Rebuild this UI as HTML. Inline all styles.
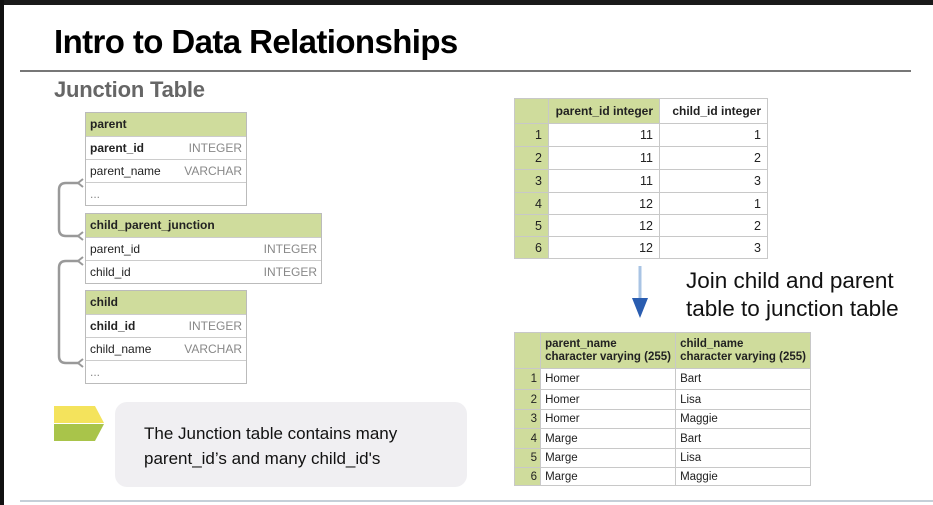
<!DOCTYPE html>
<html><head><style>
*{margin:0;padding:0;box-sizing:border-box}
body{width:933px;height:505px;background:#fff;position:relative;overflow:hidden;font-family:"Liberation Sans",sans-serif;}
.a{position:absolute}
.t{position:absolute;border:1px solid #bbb;background:#fff}
.r{height:23px;border-top:1px solid #ccc;font-size:12px;line-height:22px;padding:0 4px;display:flex;justify-content:space-between;color:#222}
.r span{color:#888}
.h{background:#cfdc9c;font-weight:bold;border-top:none}
table{border-collapse:collapse;position:absolute;font-size:12.5px;color:#222;white-space:nowrap}
td{border:1px solid #c8c8c8;padding:0 6px}
td.i{background:#cfdc9c;text-align:right}
</style></head><body>
<div class="a" style="left:0;top:0;width:933px;height:5px;background:#1a1a1a"></div>
<div class="a" style="left:0;top:0;width:4px;height:505px;background:#111"></div>
<div class="a" style="left:54px;top:23px;font-size:33px;font-weight:bold;letter-spacing:-0.6px;color:#000">Intro to Data Relationships</div>
<div class="a" style="left:20px;top:70px;width:891px;height:2px;background:#777"></div>
<div class="a" style="left:54px;top:77px;font-size:22px;font-weight:bold;color:#666;letter-spacing:-0.2px">Junction Table</div>

<svg class="a" style="left:0;top:0" width="933" height="505">
<path d="M78 183 H66 Q59 183 59 190 V229 Q59 236 66 236 H78" fill="none" stroke="#999" stroke-width="2.5"/>
<path d="M78 261 H66 Q59 261 59 268 V356 Q59 363 66 363 H78" fill="none" stroke="#999" stroke-width="2.5"/>
<path d="M83 179 L78 183 L83 187 M83 232 L78 236 L83 240 M83 257 L78 261 L83 265 M83 359 L78 363 L83 367" fill="none" stroke="#999" stroke-width="2"/>
<line x1="640" y1="266" x2="640" y2="300" stroke="#a9c4e4" stroke-width="3"/>
<polygon points="632,298 648,298 640,318" fill="#2a5db0"/>
<polygon points="54,406 95,406 104,423 54,423" fill="#f4e35c"/>
<polygon points="54,424 104,424 95,441 54,441" fill="#a9c44a"/>
<path d="M305 410 l0 8 l2 -2 l2 3" fill="#222" stroke="#222" stroke-width="0.5"/>
</svg>

<div class="t" style="left:85px;top:112px;width:162px">
<div class="r h">parent</div>
<div class="r"><b>parent_id</b><span>INTEGER</span></div>
<div class="r">parent_name<span>VARCHAR</span></div>
<div class="r"><span>...</span></div>
</div>
<div class="t" style="left:85px;top:213px;width:237px">
<div class="r h">child_parent_junction</div>
<div class="r">parent_id<span>INTEGER</span></div>
<div class="r">child_id<span>INTEGER</span></div>
</div>
<div class="t" style="left:85px;top:290px;width:162px">
<div class="r h">child</div>
<div class="r"><b>child_id</b><span>INTEGER</span></div>
<div class="r">child_name<span>VARCHAR</span></div>
<div class="r"><span>...</span></div>
</div>

<table style="left:514px;top:98px;width:254px">
<tr style="height:25px;font-weight:bold;font-size:12px"><td class="i" style="width:34px"></td><td style="background:#cfdc9c;text-align:right;width:111px">parent_id integer</td><td style="text-align:right">child_id integer</td></tr>
<tr style="height:23px"><td class="i">1</td><td style="text-align:right">11</td><td style="text-align:right">1</td></tr>
<tr style="height:23px"><td class="i">2</td><td style="text-align:right">11</td><td style="text-align:right">2</td></tr>
<tr style="height:23px"><td class="i">3</td><td style="text-align:right">11</td><td style="text-align:right">3</td></tr>
<tr style="height:22px"><td class="i">4</td><td style="text-align:right">12</td><td style="text-align:right">1</td></tr>
<tr style="height:22px"><td class="i">5</td><td style="text-align:right">12</td><td style="text-align:right">2</td></tr>
<tr style="height:22px"><td class="i">6</td><td style="text-align:right">12</td><td style="text-align:right">3</td></tr>
</table>

<div class="a" style="left:686px;top:267px;font-size:22.5px;line-height:28px;color:#111">Join child and parent<br>table to junction table</div>

<table style="left:514px;top:332px;width:297px;font-size:11.5px">
<tr style="height:36px;font-weight:bold;background:#cfdc9c;line-height:13px"><td style="width:29px"></td><td style="width:135px;padding:0 4px">parent_name<br>character varying (255)</td><td style="padding:0 4px">child_name<br>character varying (255)</td></tr>
<tr style="height:21px"><td class="i" style="padding:0 3px">1</td><td style="padding:0 4px">Homer</td><td style="padding:0 4px">Bart</td></tr>
<tr style="height:20px"><td class="i" style="padding:0 3px">2</td><td style="padding:0 4px">Homer</td><td style="padding:0 4px">Lisa</td></tr>
<tr style="height:19px"><td class="i" style="padding:0 3px">3</td><td style="padding:0 4px">Homer</td><td style="padding:0 4px">Maggie</td></tr>
<tr style="height:20px"><td class="i" style="padding:0 3px">4</td><td style="padding:0 4px">Marge</td><td style="padding:0 4px">Bart</td></tr>
<tr style="height:19px"><td class="i" style="padding:0 3px">5</td><td style="padding:0 4px">Marge</td><td style="padding:0 4px">Lisa</td></tr>
<tr style="height:18px"><td class="i" style="padding:0 3px">6</td><td style="padding:0 4px">Marge</td><td style="padding:0 4px">Maggie</td></tr>
</table>

<div class="a" style="left:115px;top:402px;width:352px;height:85px;background:#f0eff2;border-radius:12px"></div>
<div class="a" style="left:144px;top:421px;font-size:17px;line-height:25px;color:#111">The Junction table contains many<br>parent_id’s and many child_id's</div>
<div class="a" style="left:20px;top:500px;width:913px;height:2px;background:#c5cfd8"></div>
</body></html>
